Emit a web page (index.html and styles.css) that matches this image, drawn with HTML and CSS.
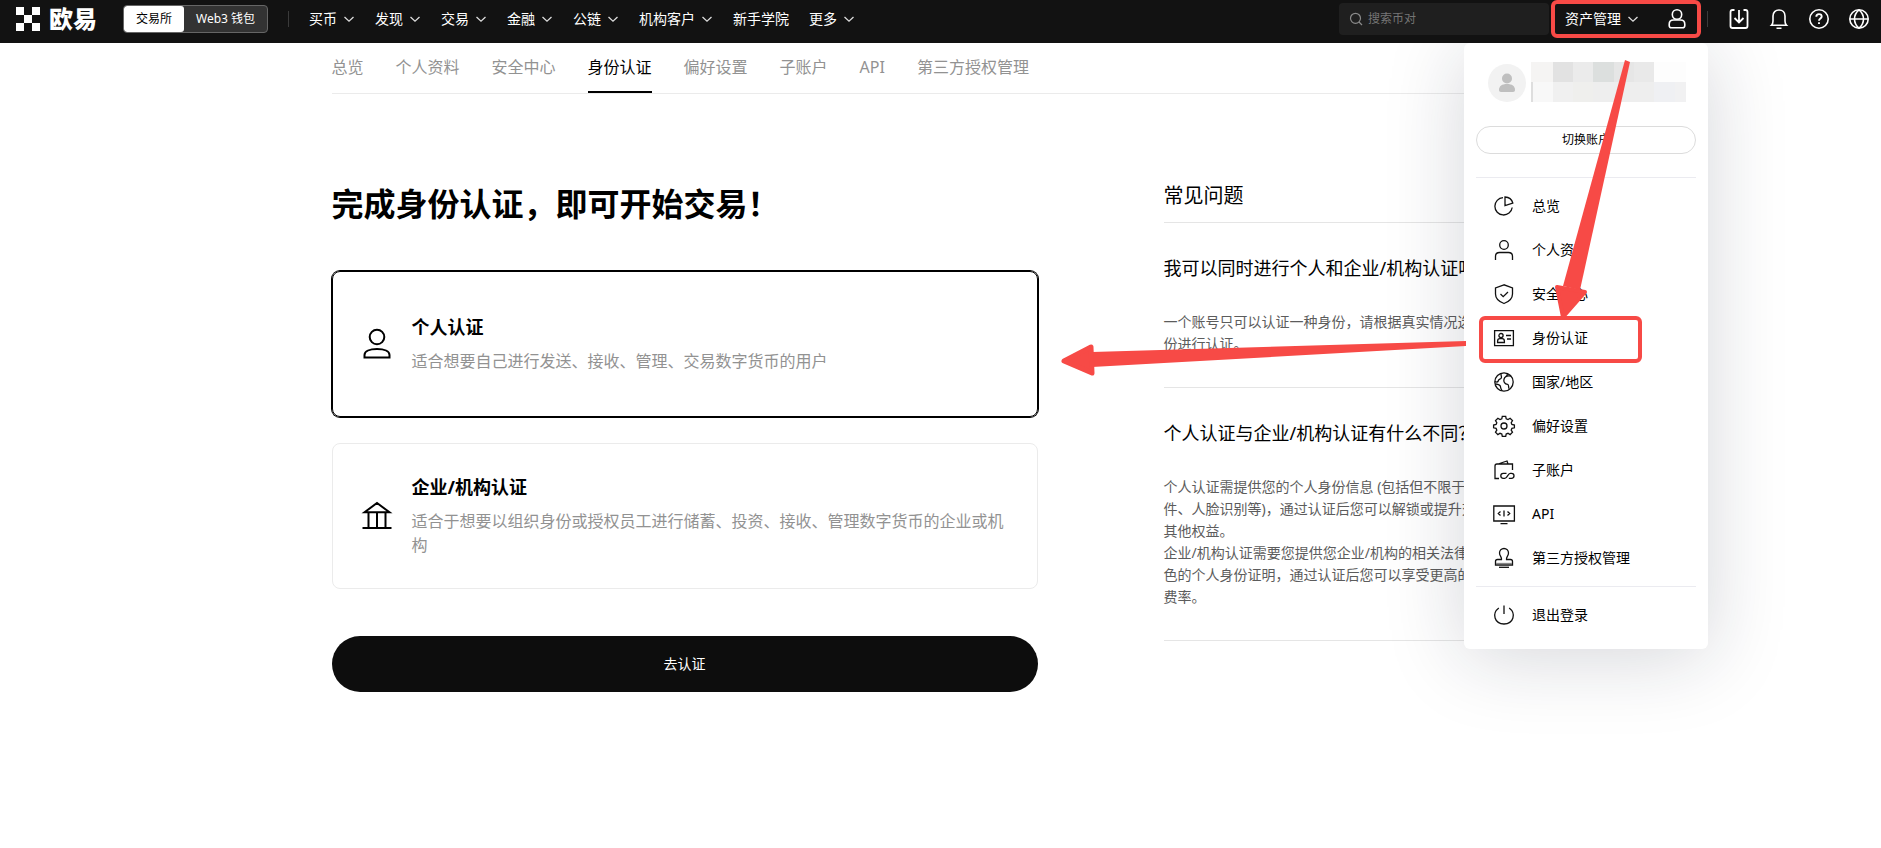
FILE: index.html
```html
<!DOCTYPE html>
<html lang="zh-CN">
<head>
<meta charset="utf-8">
<title>身份认证</title>
<link rel="stylesheet" href="styles.css">
</head>
<body>
<svg class="sprite" aria-hidden="true">
  <symbol id="chev" viewBox="0 0 12 12"><path d="M1.500 4 6 8.200 10.500 4" fill="none" stroke="currentColor" stroke-width="1.300"/></symbol>
</svg>
<header class="topbar">
  <a class="logo" href="#">
    <svg width="25" height="24" viewBox="0 0 25 24" fill="#fff" aria-hidden="true"><path d="M0 0h8v8H0zM16 0h8v8h-8zM8 8h8v8H8zM0 16h8v8H0zM16 16h8v8h-8z"/></svg>
    <span>欧易</span>
  </a>
  <div class="switch">
    <button class="switch-item active">交易所</button>
    <button class="switch-item">Web3 钱包</button>
  </div>
  <span class="bar"></span>
  <nav class="nav">
    <button>买币<svg class="chev"><use href="#chev"/></svg></button>
    <button>发现<svg class="chev"><use href="#chev"/></svg></button>
    <button>交易<svg class="chev"><use href="#chev"/></svg></button>
    <button>金融<svg class="chev"><use href="#chev"/></svg></button>
    <button>公链<svg class="chev"><use href="#chev"/></svg></button>
    <button>机构客户<svg class="chev"><use href="#chev"/></svg></button>
    <a href="#">新手学院</a>
    <button>更多<svg class="chev"><use href="#chev"/></svg></button>
  </nav>
  <label class="search">
    <svg width="14" height="14" viewBox="0 0 14 14" fill="none" stroke="#8a8a8a" stroke-width="1.200" aria-hidden="true"><circle cx="6.500" cy="6.300" r="5"/><path d="m10 10 3 3"/></svg>
    <input type="text" placeholder="搜索币对" aria-label="搜索币对">
  </label>
  <button class="assets">资产管理<svg class="chev"><use href="#chev"/></svg></button>
  <button class="icon-btn user" aria-label="账户">
    <svg width="20" height="22" viewBox="0 0 20 22" fill="none" stroke="#fff" stroke-width="1.600"><circle cx="10" cy="6.500" r="4.700"/><path d="M6.500 12h7c2.600 0 4.300 1.700 4.300 4.200v1.300c0 1.500-.8 2.300-2.300 2.300h-11c-1.500 0-2.300-.8-2.300-2.300v-1.300C2.200 13.700 3.900 12 6.500 12z"/></svg>
  </button>
  <span class="bar"></span>
  <div class="tools">
    <button class="icon-btn" aria-label="下载">
      <svg width="22" height="22" viewBox="0 0 22 22" fill="none" stroke="#fff" stroke-width="1.800"><path d="M6.500 2H4.500Q2.500 2 2.500 4v14q0 2 2 2h13q2 0 2-2V4q0-2-2-2h-2M11 2v12M6.500 10l4.500 4.500 4.500-4.500"/></svg>
    </button>
    <button class="icon-btn" aria-label="通知">
      <svg width="22" height="22" viewBox="0 0 22 22" fill="none" stroke="#fff" stroke-width="1.600"><path d="M3.500 17.200c1.200-1.200 1.500-2.400 1.500-4.200V8c0-3.600 2.500-6 6-6s6 2.400 6 6v5c0 1.800.3 3 1.500 4.200zM8.500 20.200h5"/></svg>
    </button>
    <button class="icon-btn" aria-label="帮助">
      <svg width="22" height="22" viewBox="0 0 22 22" fill="none" stroke="#fff" stroke-width="1.600"><circle cx="11" cy="11" r="9.200"/><path d="M8.300 8.700c0-1.600 1.100-2.600 2.700-2.600s2.700 1 2.700 2.400c0 2-2.700 2.200-2.700 4.300M11 14.200v1.800" stroke-width="1.900"/></svg>
    </button>
    <button class="icon-btn" aria-label="语言">
      <svg width="22" height="22" viewBox="0 0 22 22" fill="none" stroke="#fff" stroke-width="1.600"><circle cx="11" cy="11" r="9.200"/><path d="M11 1.800c-6 5-6 13.400 0 18.400M11 1.800c6 5 6 13.400 0 18.400M2 11h18"/></svg>
    </button>
  </div>
</header>

<div class="page">
  <nav class="tabs">
    <a href="#">总览</a>
    <a href="#">个人资料</a>
    <a href="#">安全中心</a>
    <a href="#" class="current">身份认证</a>
    <a href="#">偏好设置</a>
    <a href="#">子账户</a>
    <a href="#">API</a>
    <a href="#">第三方授权管理</a>
  </nav>
  <main class="columns">
    <form class="verify">
      <h1>完成身份认证，即可开始交易！</h1>
      <label class="card selected">
        <input type="radio" name="kind" checked>
        <svg width="32" height="32" viewBox="0 0 32 32" fill="none" stroke="#000" stroke-width="2" aria-hidden="true"><circle cx="16" cy="9" r="7.300"/><path d="M3.500 29.500V27c0-3.700 5-6 12.500-6s12.500 2.300 12.500 6v2.500z"/></svg>
        <span class="card-text">
          <strong>个人认证</strong>
          <span>适合想要自己进行发送、接收、管理、交易数字货币的用户</span>
        </span>
      </label>
      <label class="card">
        <input type="radio" name="kind">
        <svg width="32" height="32" viewBox="0 0 32 32" fill="none" stroke="#000" stroke-width="2" aria-hidden="true"><path d="M3.500 12.300 16 3l12.500 9.300zM7.500 12v16M16 12v16M24.500 12v16M1.500 28h29"/></svg>
        <span class="card-text">
          <strong>企业/机构认证</strong>
          <span>适合于想要以组织身份或授权员工进行储蓄、投资、接收、管理数字货币的企业或机构</span>
        </span>
      </label>
      <button type="button" class="submit">去认证</button>
    </form>
    <aside class="faq">
      <h2>常见问题</h2>
      <section>
        <h3>我可以同时进行个人和企业/机构认证吗？</h3>
        <p>一个账号只可以认证一种身份，请根据真实情况选择对应的身份进行认证。</p>
      </section>
      <section>
        <h3>个人认证与企业/机构认证有什么不同？</h3>
        <p>个人认证需提供您的个人身份信息 (包括但不限于身份证<br>件、人脸识别等)，通过认证后您可以解锁或提升交易额<br>其他权益。</p>
        <p>企业/机构认证需要您提供您企业/机构的相关法律文件、角<br>色的个人身份证明，通过认证后您可以享受更高的限额及<br>费率。</p>
      </section>
    </aside>
  </main>
</div>

<div class="menu">
  <div class="profile">
    <svg width="38" height="38" viewBox="0 0 38 38" aria-hidden="true"><circle cx="19" cy="19" r="19" fill="#f2f2f2"/><g fill="#bfbfbf"><circle cx="19" cy="14.500" r="5"/><path d="M11 26c0-4 3-6 8-6s8 2 8 6c0 1.300-.7 2-2 2H13c-1.300 0-2-.7-2-2z"/></g></svg>
    <svg class="mosaic" width="155" height="40" viewBox="0 0 155 40" shape-rendering="crispEdges" aria-hidden="true">
      <path fill="#f5f4f3" d="M0 0h22v20H0z"/><path fill="#e2e2e2" d="M22 0h20v20H22z"/><path fill="#ebebeb" d="M42 0h20v20H42z"/><path fill="#dcdfde" d="M62 0h21v20H62z"/><path fill="#e6e6e6" d="M83 0h20v20H83z"/><path fill="#e9e9e9" d="M103 0h20v20h-20z"/><path fill="#fdfdfd" d="M123 0h32v20h-32z"/>
      <path fill="#f8f8f8" d="M0 20h22v20H0z"/><path fill="#f0f0f0" d="M22 20h20v20H22z"/><path fill="#efefed" d="M42 20h20v20H42z"/><path fill="#eee" d="M62 20h61v20H62z"/><path fill="#eff0f3" d="M123 20h21v20h-21z"/><path fill="#f1f1f2" d="M144 20h11v20h-11z"/><path fill="#dedede" d="M0 20h2v20H0z"/>
    </svg>
  </div>
  <button class="swap">切换账户</button>
  <nav class="menu-list">
    <a href="#"><svg viewBox="0 0 20 20"><path d="M9 1.600A8.700 8.700 0 1 0 18.200 11.500M11 1v8.500L18.800 7C18 4 15 1.200 11 1z"/></svg>总览</a>
    <a href="#"><svg viewBox="0 0 20 20"><circle cx="10" cy="5" r="4.300"/><path d="M1.500 20v-3.500c0-2.500 1.500-4 4-4h9c2.500 0 4 1.500 4 4V20"/></svg>个人资料</a>
    <a href="#"><svg viewBox="0 0 20 20"><path d="M10 .8 1.500 4v6c0 4.500 3 7.500 8.500 9.500 5.500-2 8.500-5 8.500-9.500V4zM6.500 10l2.700 2.700L14 8"/></svg>安全中心</a>
    <a href="#"><svg viewBox="0 0 20 20"><path d="M.6 2.600h18.800v15H.6zM12 7.500h5M13 11h4"/><circle cx="7" cy="7.600" r="2.100"/><path d="M3.600 14.500v-1.300q0-2.500 2.200-2.500h2.400q2.200 0 2.200 2.500v1.300z"/></svg>身份认证</a>
    <a href="#"><svg viewBox="0 0 20 20"><circle cx="10" cy="10" r="9.200"/><path d="M7 1.500c-.2 2.500 1 3.200.3 4.500C6.500 7.500 4.600 7 4.200 9c-.3 1.500-2 1-3.200.7M1.500 12c3 .3 5 .5 5 2.800 0 2 1.200 2.500 1.500 4.200M17 4.200c-2.500-.5-6 0-7 3-.8 2.600.8 5 3.600 5.200 1.500.1.500 2.600 1.500 4.400M13.500 1.800c0 1.700-1 2.500-2.500 3.400"/></svg>国家/地区</a>
    <a href="#"><svg viewBox="0 0 20 20"><circle cx="10" cy="10" r="3"/><path d="M8.300.3h3.400l.5 2.500 1.800.7 2.100-1.300 2.400 2.400-1.300 2.100.7 1.800 2.500.5v2.800l-2.500.6-.7 1.700 1.300 2.100-2.400 2.400-2.100-1.300-1.800.7-.5 2.400H8.300l-.5-2.400-1.800-.7-2.100 1.300-2.400-2.400 1.300-2.100-.7-1.700-2.500-.6V9l2.500-.5.7-1.800-1.300-2.100 2.400-2.400L6 3.500l1.800-.7z"/></svg>偏好设置</a>
    <a href="#"><svg viewBox="0 0 20 20"><path d="M5 18.500H1V6q0-2 2-2h15.500v6M4 4l9-3 1 3"/><path d="M12.500 13.300H9.300a2.500 2.500 0 0 0 0 5h1.500c2.500 0 3-5 5.500-5h1.200a2.500 2.500 0 0 1 0 5h-2.700"/></svg>子账户</a>
    <a href="#"><svg viewBox="0 0 20 20"><path d="M-.2 2h20.600v15H-.2zM6.500 19.700h7M6.500 7.500l-2.200 2 2.200 2M13.500 7.500l2.200 2-2.200 2M10 6.500v6"/></svg>API</a>
    <a href="#"><svg viewBox="0 0 20 20"><path d="M7.500 11.500C8 9 5.500 8 5.500 5a4.500 4.500 0 0 1 9 0c0 3-2.500 4-2 6.500h4q2 0 2 2V17h-17v-3.500q0-2 2-2z"/><path stroke="#888" d="M2 15.500h16"/><path d="M5 19.300h10"/></svg>第三方授权管理</a>
  </nav>
  <nav class="menu-list last">
    <a href="#"><svg viewBox="0 0 20 20"><path d="M10 .5V9M4.800 3C-2.500 8.500.5 19 10 19s12.500-10.500 5.200-16"/></svg>退出登录</a>
  </nav>
</div>

<svg class="marks" width="821" height="400" viewBox="1060 0 821 400" aria-hidden="true">
  <g fill="none" stroke="#f74a46" stroke-width="4"><rect x="1553" y="2" width="146" height="34" rx="4"/><rect x="1481" y="318" width="159" height="43" rx="4"/></g>
  <g fill="#f74a46" stroke="#f74a46" stroke-linejoin="round">
    <path stroke="none" d="m1625 60 5 2-50 228-17-4z"/>
    <path stroke-width="4" d="m1557 287 28 5-22 25z"/>
    <path stroke="none" d="M1466 341v5l-374 21v-15z"/>
    <path stroke-width="5" d="m1091 347 1 26-28-12z"/>
  </g>
</svg>
</body>
</html>
```

FILE: styles.css
```css
* { box-sizing: border-box; }
body {
  margin: 0;
  position: relative;
  min-height: 100vh;
  background: #fff;
  color: #000;
  font-family: "Noto Sans", "Noto Sans CJK SC", sans-serif;
  font-size: 14px;
  line-height: 22px;
}
button, input { font: inherit; color: inherit; border: 0; background: none; padding: 0; margin: 0; }
button { cursor: pointer; }
a { color: inherit; text-decoration: none; }
h1, h2, h3, p { margin: 0; }
svg { display: block; flex: none; }
.sprite { position: absolute; width: 0; height: 0; }

.topbar {
  position: relative;
  z-index: 2;
  display: flex;
  align-items: center;
  height: 43px;
  padding: 0 11px 5px 16px;
  background: #121212;
  color: #fff;
}
.logo { display: flex; align-items: center; gap: 8px; width: 107px; font-size: 24px; font-weight: 900; line-height: 24px; }
.switch { display: flex; height: 28px; border: 1px solid #666; border-radius: 4px; background: #333; font-size: 12px; overflow: hidden; }
.switch-item { padding: 0 12px; }
.switch-item.active { background: #fff; color: #000; border-radius: 3px; }
.bar { width: 1px; height: 16px; background: #3a3a3a; margin: 0 20px; }
.nav { display: flex; gap: 20px; }
.nav button, .nav a, .assets { display: flex; align-items: center; gap: 6px; white-space: nowrap; }
.chev { width: 12px; height: 12px; color: #ddd; }
.search { display: flex; align-items: center; gap: 5px; width: 210px; height: 32px; margin-left: auto; padding: 0 10px; background: #1f1f1f; border-radius: 4px; }
.search input { flex: 1; min-width: 0; font-size: 12px; outline: 0; }
.search input::placeholder { color: #757575; opacity: 1; }
.assets { margin-left: 16px; }
.user { margin-left: 28px; }
.tools { display: flex; gap: 18px; }

.page { max-width: 1218px; margin: 0 auto; }
.tabs { display: flex; gap: 32px; border-bottom: 1px solid #ebebeb; font-size: 16px; line-height: 24px; color: #929292; }
.tabs a { padding: 12px 0; border-bottom: 2px solid transparent; }
.tabs .current { color: #000; border-color: #000; }

.columns { display: grid; grid-template-columns: 706px 1fr; gap: 126px; }
.verify { display: flex; flex-direction: column; padding-top: 86px; }
h1 { font-size: 32px; line-height: 48px; margin-bottom: 43px; }
.card { position: relative; display: flex; align-items: center; gap: 19px; min-height: 146px; padding: 24px 28px; margin-bottom: 26px; border: 1px solid #ebebeb; border-radius: 8px; }
.card.selected { border-color: #000; box-shadow: 0 0 0 1px #000; }
.card input { position: absolute; opacity: 0; }
.card-text { display: grid; gap: 10px; font-size: 16px; line-height: 24px; color: #929292; }
.card-text strong { font-size: 18px; color: #000; }
.submit { height: 56px; margin-top: 21px; border-radius: 28px; background: #0d0d0d; color: #fff; }

.faq { padding-top: 86px; }
h2 { font-size: 20px; line-height: 32px; font-weight: 400; padding-bottom: 10px; border-bottom: 1px solid #e5e5e5; }
h3 { font-size: 18px; line-height: 28px; font-weight: 400; margin-bottom: 29px; white-space: nowrap; }
.faq section { padding: 31px 0 32px; border-bottom: 1px solid #e5e5e5; }
.faq p { color: #5c5c5c; }

.menu { position: absolute; z-index: 1; top: 43px; right: 173px; width: 244px; padding: 19px 12px 6px; background: #fff; border-radius: 6px; box-shadow: 0 8px 80px rgba(20, 25, 50, .18); }
.profile { display: flex; align-items: flex-end; gap: 5px; padding-left: 12px; }
.swap { display: block; width: 100%; height: 28px; margin: 24px 0 23px; border: 1px solid #dcdcdc; border-radius: 14px; font-size: 12px; }
.menu-list { border-top: 1px solid #ebebf0; padding: 6px 0; }
.menu-list a { display: flex; align-items: center; gap: 18px; height: 44px; padding-left: 18px; }
.menu-list svg { width: 20px; height: 20px; overflow: visible; fill: none; stroke: #111; stroke-width: 1.3; }
.marks { position: absolute; z-index: 3; top: 0; right: 0; pointer-events: none; }
```
